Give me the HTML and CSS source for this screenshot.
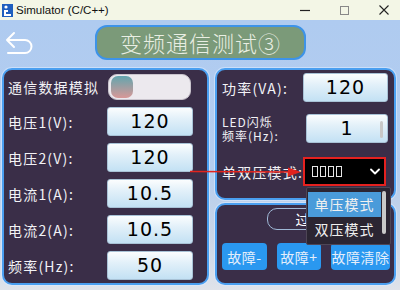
FILE: index.html
```html
<!DOCTYPE html>
<html>
<head>
<meta charset="utf-8">
<link rel="stylesheet" href="styles.css">
</head>
<body>
<div class="titlebar">
  <svg class="app-icon" width="11" height="13" viewBox="0 0 11 13">
    <rect x="0" y="0" width="11" height="13" fill="#1f5fbf"/>
    <circle cx="4" cy="3" r="1.6" fill="#fff"/>
    <path d="M2 6 H6 V8 H4 V10 H9 V12 H2 Z" fill="#fff"/>
  </svg>
  <span class="title-text">Simulator (C/C++)</span>
  <div class="controls">
    <svg width="10" height="10" viewBox="0 0 10 10"><path d="M0 5.5 H10" stroke="#222" stroke-width="1.2"/></svg>
    <svg width="9" height="9" viewBox="0 0 9 9"><rect x="0.5" y="0.5" width="8" height="8" fill="none" stroke="#888" stroke-width="1"/></svg>
    <svg width="10" height="10" viewBox="0 0 10 10"><path d="M0.5 0.5 L9.5 9.5 M9.5 0.5 L0.5 9.5" stroke="#222" stroke-width="1.1"/></svg>
  </div>
</div>
<div class="content">
  <div class="header">
    <svg class="back" width="36" height="30" viewBox="0 0 36 30">
      <path d="M14 5 L7 12 L14 19 M7 12 H25 A6.5 6.5 0 0 1 25 25 H8" fill="none" stroke="#fff" stroke-width="2" stroke-linecap="round" stroke-linejoin="round"/>
    </svg>
    <div class="page-title">变频通信测试③</div>
  </div>
  <div class="main">
    <div class="panel left">
      <div class="row">
        <span class="label">通信数据模拟</span>
        <div class="toggle"><span class="knob"></span></div>
      </div>
      <div class="row"><span class="label">电压1(V):</span><div class="field">120</div></div>
      <div class="row"><span class="label">电压2(V):</span><div class="field">120</div></div>
      <div class="row"><span class="label">电流1(A):</span><div class="field">10.5</div></div>
      <div class="row"><span class="label">电流2(A):</span><div class="field">10.5</div></div>
      <div class="row"><span class="label">频率(Hz):</span><div class="field">50</div></div>
    </div>
    <div class="right-col">
      <div class="panel rtop">
        <div class="rrow"><span class="label">功率(VA):</span><div class="field">120</div></div>
        <div class="rrow led-row"><span class="label small">LED闪烁<br>频率(Hz):</span><div class="field led">1<span class="vscroll"></span></div></div>
        <div class="rrow sel-row">
          <span class="label">单双压模式:</span>
          <div class="select">
            <span class="tofu"><i></i><i></i><i></i><i></i></span>
            <svg class="chev" width="10" height="7" viewBox="0 0 10 7"><path d="M1 1.5 L5 5.5 L9 1.5" fill="none" stroke="#fff" stroke-width="1.8" stroke-linecap="round" stroke-linejoin="round"/></svg>
          </div>
        </div>
      </div>
      <div class="panel rbot">
        <div class="status-pill">过压</div>
        <div class="btns">
          <button class="btn b1">故障-</button>
          <button class="btn b2">故障+</button>
          <button class="btn b3">故障清除</button>
        </div>
      </div>
    </div>
  </div>
</div>
<svg class="arrow" width="112" height="14" viewBox="0 0 112 14">
  <path d="M0 6.5 L100 7" stroke="#e2231d" stroke-width="1.4"/>
  <path d="M98 2.5 L111 7 L98 11.5 Z" fill="#e2231d"/>
</svg>
<div class="dropdown">
  <div class="opt active">单压模式</div>
  <div class="opt">双压模式</div>
  <span class="dscroll"></span>
</div>
</body>
</html>
```
FILE: styles.css
```css
* { box-sizing: border-box; margin: 0; padding: 0; }
html, body { width: 400px; height: 290px; overflow: hidden; }
body {
  position: relative;
  font-family: "Noto Sans CJK SC", "Noto Sans", sans-serif;
  background: #f3f6e7;
}
.titlebar {
  height: 20px;
  display: flex;
  align-items: center;
  background: #f3f6e6;
  padding-left: 2px;
}
.app-icon { margin-right: 3px; margin-top: 1px; }
.title-text {
  font-family: "Liberation Sans", Arial, sans-serif;
  font-size: 11.5px;
  color: #111;
}
.controls {
  margin-left: auto;
  margin-right: 11px;
  display: flex;
  align-items: center;
  gap: 30px;
}
.content {
  height: 270px;
  background: linear-gradient(180deg, #afcbf0 0%, #b4cdef 55%, #c9d5e6 80%, #dfe3ea 100%);
}
.header {
  height: 48px;
  display: flex;
  align-items: flex-start;
}
.back { margin-top: 8px; }
.page-title {
  margin-left: 59px;
  margin-top: 5px;
  width: 211px;
  height: 35px;
  background: #7b9a79;
  border: 2px solid #3d93e8;
  border-radius: 12px;
  color: #e9eee3;
  font-size: 22px;
  font-weight: 300;
  letter-spacing: 1px;
  line-height: 31px;
  text-align: center;
}
.main {
  display: flex;
  gap: 6px;
  padding-left: 2px;
}
.panel {
  background: #3a2e48;
  border: 2px solid #4a9ff0;
  border-radius: 10px;
  box-shadow: 0 0 0 1px rgba(220, 235, 255, 0.6);
}
.left {
  width: 207px;
  height: 217px;
  padding: 4px 0 0 4px;
  display: flex;
  flex-direction: column;
  gap: 7px;
}
.row {
  display: grid;
  grid-template-columns: 99px 86px;
  align-items: center;
}
.label {
  color: #f2f2f6;
  font-size: 14px;
  letter-spacing: 1.2px;
  white-space: nowrap;
}
.label.small {
  font-size: 12px;
  line-height: 14px;
  letter-spacing: 1px;
}
.toggle {
  width: 83px;
  height: 26px;
  margin-left: 1px;
  background: #ece9ee;
  border: 1px solid #c9c4cd;
  border-radius: 9px;
  display: flex;
  align-items: center;
  padding-left: 2px;
}
.knob {
  width: 22px;
  height: 22px;
  border-radius: 7px;
  background: linear-gradient(180deg, #62a5ae 0%, #d89897 100%);
}
.field {
  position: relative;
  height: 29px;
  background: linear-gradient(180deg, #fbfdfe 0%, #e2f0f9 40%, #c3e1f4 100%);
  border: 1px solid #a8c2d6;
  border-radius: 3px;
  font-family: "DejaVu Sans", Verdana, sans-serif;
  font-size: 19px;
  letter-spacing: 1px;
  line-height: 27px;
  text-align: center;
  color: #000;
}
.right-col {
  width: 181px;
  display: flex;
  flex-direction: column;
  gap: 3px;
}
.rtop {
  height: 132px;
  padding: 3px 0 0 5px;
}
.rrow {
  display: grid;
  grid-template-columns: 81px 85px;
  align-items: center;
}
.led-row { margin-top: 12px; grid-template-columns: 84px 82px; }
.sel-row { margin-top: 14px; grid-template-columns: 81px 83px; }
.vscroll {
  position: absolute;
  right: 4px;
  top: 6px;
  width: 3px;
  height: 17px;
  border-radius: 2px;
  background: #c8c8c8;
}
.select {
  height: 29px;
  background: #000;
  border: 2px solid #e5211f;
  display: flex;
  align-items: center;
  padding-left: 7px;
  padding-right: 4px;
}
.tofu { display: flex; gap: 2px; }
.tofu i {
  display: block;
  width: 6px;
  height: 11px;
  border: 1px solid #e6e6e6;
}
.chev { margin-left: auto; }
.rbot {
  height: 82px;
  padding: 3px 0 0 5px;
}
.status-pill {
  margin-left: 45px;
  width: 87px;
  height: 22px;
  border: 1px solid #9fb8d6;
  border-radius: 10px;
  color: #fff;
  font-size: 14px;
  line-height: 20px;
  text-align: center;
  letter-spacing: 1px;
}
.btns {
  margin-top: 13px;
  display: flex;
  gap: 10px;
}
.btn {
  height: 27px;
  border: none;
  border-radius: 4px;
  background: #2a98f0;
  color: #e4eefb;
  font-family: "Noto Sans CJK SC", sans-serif;
  font-size: 14px;
  letter-spacing: 0.5px;
}
.b1 { width: 45px; }
.b2 { width: 44px; }
.b3 { width: 59px; }
.arrow {
  position: absolute;
  left: 190px;
  top: 165px;
}
.dropdown {
  position: absolute;
  left: 306px;
  top: 187px;
  width: 85px;
  height: 58px;
  background: #2b2532;
  border: 1px solid #4e4656;
  border-radius: 2px;
  padding: 4px 9px 0 1px;
}
.opt {
  height: 25px;
  color: #f0f0f0;
  font-size: 14px;
  line-height: 25px;
  text-align: center;
  letter-spacing: 1px;
}
.opt.active { background: #4a9bda; }
.dscroll {
  position: absolute;
  right: 4px;
  top: 3px;
  width: 4px;
  height: 43px;
  border-radius: 2px;
  background: #c9c9c9;
}
```
